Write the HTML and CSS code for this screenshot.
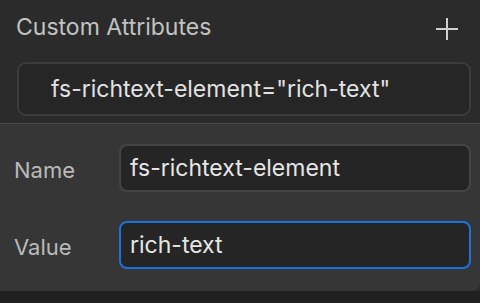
FILE: index.html
```html
<!DOCTYPE html>
<html>
<head>
<meta charset="utf-8">
<link rel="stylesheet" href="styles.css">
</head>
<body>
<div class="page">
  <div class="header">
    <div class="title">Custom Attributes</div>
    <svg class="plus" width="24" height="24" viewBox="0 0 24 24"><path d="M12 1V23M1 12H23" stroke="#cfcfcf" stroke-width="2" fill="none"/></svg>
  </div>
  <div class="attr">fs-richtext-element="rich-text"</div>
  <div class="panel">
    <div class="row">
      <div class="label">Name</div>
      <div class="input">fs-richtext-element</div>
    </div>
    <div class="row">
      <div class="label">Value</div>
      <div class="input focus">rich-text</div>
    </div>
  </div>
</div>
</body>
</html>
```
FILE: styles.css
```css
html, body {
  margin: 0;
  padding: 0;
  background: #202020;
}
body {
  width: 480px;
  height: 303px;
  overflow: hidden;
  font-family: Inter, "Noto Sans", sans-serif;
}
.page {
  background: #2b2b2b;
  display: flex;
  flex-direction: column;
}
.header {
  display: flex;
  justify-content: space-between;
  align-items: flex-start;
  padding: 13px 21px 0 16px;
}
.title {
  font-size: 23px;
  line-height: 28px;
  color: #c2c2c2;
}
.plus {
  margin-top: 4px;
}
.attr {
  margin: 21px 9px 0 17px;
  height: 54px;
  box-sizing: border-box;
  border: 2px solid #3c3c3c;
  border-radius: 9px;
  background: #262626;
  padding-left: 32px;
  display: flex;
  align-items: center;
  font-size: 23px;
  color: #e2e2e2;
}
.panel {
  margin-top: 7px;
  border-top: 1px solid #464646;
  background: #363636;
  height: 168px;
  border-bottom-right-radius: 8px;
  padding: 20px 9px 0 14px;
  box-sizing: border-box;
  display: flex;
  flex-direction: column;
  gap: 29px;
}
.row {
  display: flex;
  align-items: center;
}
.label {
  width: 105px;
  font-size: 22px;
  color: #bababa;
  padding-top: 4px;
}
.input {
  flex: 1;
  height: 48px;
  box-sizing: border-box;
  border: 2px solid #444;
  border-radius: 8px;
  background: #252525;
  padding-left: 9px;
  display: flex;
  align-items: center;
  font-size: 23px;
  color: #e6e6e6;
}
.input.focus {
  border-color: #1c72dc;
}
```
